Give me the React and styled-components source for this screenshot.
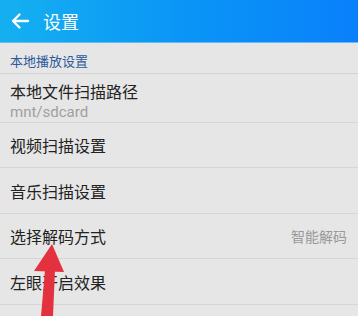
import React from "react";
import styled, { createGlobalStyle } from "styled-components";

const Global = createGlobalStyle`
  html, body { margin: 0; padding: 0; background: #e6e6e6; overflow: hidden; }
  body { font-family: "Noto Sans CJK SC", "Noto Sans", sans-serif; }
`;

const Screen = styled.div`
  position: relative;
  width: 358px;
  height: 316px;
  background: #e6e6e6;
  overflow: hidden;
`;

const Header = styled.header`
  height: 43px;
  display: flex;
  align-items: center;
  gap: 12px;
  padding-left: 9px;
  background: linear-gradient(90deg, #15b0f0 0%, #0a96f6 50%, #0a80fb 100%);
  border-bottom: 1px solid #6cb8f0;
  box-sizing: border-box;
`;

const Title = styled.h1`
  margin: 0;
  font-size: 18px;
  font-weight: 400;
  color: #fff;
  line-height: 1;
`;

const SectionHeader = styled.div`
  height: 31px;
  display: flex;
  align-items: center;
  padding: 4px 0 0 10px;
  font-size: 13px;
  color: #2d5a9a;
  border-bottom: 1px solid #d4d4d4;
  box-sizing: border-box;
`;

const Row = styled.div`
  height: ${(p) => p.$h}px;
  display: flex;
  align-items: center;
  justify-content: space-between;
  padding: 0 11px 0 10px;
  border-bottom: 1px solid #d6d6d6;
  box-sizing: border-box;
`;

const Texts = styled.div`
  display: flex;
  flex-direction: column;
  padding-top: 6px;
`;

const Label = styled.span`
  font-size: 16px;
  color: #222;
  line-height: 22px;
`;

const Sub = styled.span`
  font-size: 15px;
  color: #a0a0a0;
  line-height: 20px;
  font-family: "Roboto", "Noto Sans", sans-serif;
`;

const Value = styled.span`
  font-size: 14px;
  color: #999;
`;

const Arrow = styled.svg`
  position: absolute;
  left: 0;
  top: 0;
  pointer-events: none;
`;

const BackIcon = () => (
  <svg width="22" height="22" viewBox="0 0 22 22">
    <path d="M19 11H4M10.5 4.5L4 11l6.5 6.5" stroke="#fff" strokeWidth="2.3" fill="none" strokeLinecap="round" strokeLinejoin="round" />
  </svg>
);

export default function App() {
  return (
    <Screen>
      <Global />
      <Header>
        <BackIcon />
        <Title>设置</Title>
      </Header>
      <SectionHeader>本地播放设置</SectionHeader>
      <Row $h={49}>
        <Texts>
          <Label>本地文件扫描路径</Label>
          <Sub>mnt/sdcard</Sub>
        </Texts>
      </Row>
      <Row $h={45}>
        <Label>视频扫描设置</Label>
      </Row>
      <Row $h={46}>
        <Label>音乐扫描设置</Label>
      </Row>
      <Row $h={45}>
        <Label>选择解码方式</Label>
        <Value>智能解码</Value>
      </Row>
      <Row $h={46}>
        <Label>左眼开启效果</Label>
      </Row>
      <Arrow width="358" height="316" viewBox="0 0 358 316">
        <polygon points="41,316 53,316 55,270 45,270" fill="#e3313f" />
        <polygon points="52,244 34,271 64,272" fill="#e3313f" />
      </Arrow>
    </Screen>
  );
}
